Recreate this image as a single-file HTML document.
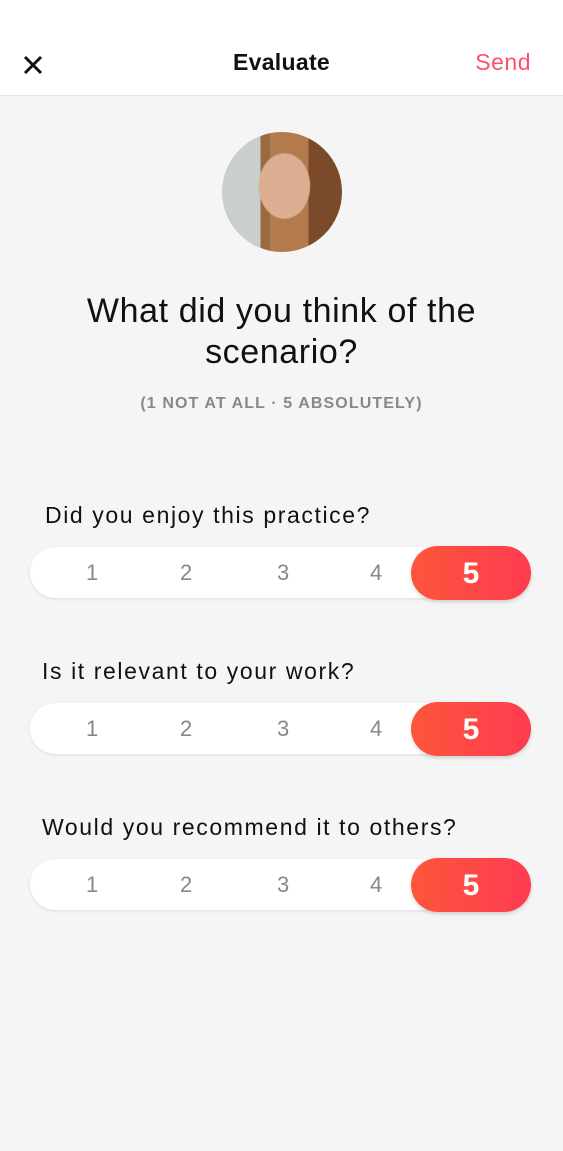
<!DOCTYPE html>
<html><head><meta charset="utf-8"><style>
*{margin:0;padding:0;box-sizing:border-box}
body{width:563px;height:1151px;background:#f5f5f5;font-family:"Liberation Sans",Arial,sans-serif;position:relative;overflow:hidden}
.hdr{position:absolute;left:0;top:0;width:563px;height:96px;background:#fff;border-bottom:1px solid #e4e4e4}
.title{position:absolute;top:49px;left:0;width:563px;text-align:center;font-size:23px;font-weight:bold;color:#111;letter-spacing:.3px}
.send{position:absolute;top:49px;right:32px;font-size:23px;color:#fe5068;letter-spacing:.5px}
.x{position:absolute;left:22px;top:54px}
.av{position:absolute;left:222px;top:132px;width:120px;height:120px;border-radius:50%;overflow:hidden;background:radial-gradient(ellipse 22% 28% at 52% 45%,#dcae92 0 95%,transparent 100%),linear-gradient(90deg,#c9cfcc 0 32%,#9a6a40 32% 40%,#b37a4e 40% 72%,#7a4a2a 72% 100%)}
.q{position:absolute;top:291px;left:0;width:563px;text-align:center;font-size:34px;line-height:41px;color:#111;letter-spacing:.6px}
.sub{position:absolute;top:395px;left:0;width:563px;text-align:center;font-size:16px;color:#888;letter-spacing:1.1px;font-weight:bold}
.lbl{position:absolute;font-size:23px;color:#111;letter-spacing:1.6px}
.bar{position:absolute;left:30px;width:498px;height:51px;background:#fff;border-radius:26px;box-shadow:0 1px 3px rgba(0,0,0,.1)}
.bar span{position:absolute;top:13px;font-size:22px;color:#888}
.sel{position:absolute;left:381px;top:-1px;width:120px;height:54px;border-radius:27px;background:linear-gradient(90deg,#fd553b,#fe3c50);box-shadow:0 2px 4px rgba(0,0,0,.15);color:#fff;font-size:30px;text-align:center;line-height:56px;font-weight:bold}
</style></head><body>
<div class="hdr">
<svg class="x" width="22" height="22" viewBox="0 0 22 22"><path d="M3 3L19 19M19 3L3 19" stroke="#111" stroke-width="3"/></svg>
<div class="title">Evaluate</div><div class="send">Send</div>
</div>
<div class="av"></div>
<div class="q">What did you think of the<br>scenario?</div>
<div class="sub">(1 NOT AT ALL · 5 ABSOLUTELY)</div>

<div class="lbl" style="left:45px;top:502px">Did you enjoy this practice?</div>
<div class="bar" style="top:547px"><span style="left:56px">1</span><span style="left:150px">2</span><span style="left:247px">3</span><span style="left:340px">4</span><div class="sel">5</div></div>

<div class="lbl" style="left:42px;top:658px">Is it relevant to your work?</div>
<div class="bar" style="top:703px"><span style="left:56px">1</span><span style="left:150px">2</span><span style="left:247px">3</span><span style="left:340px">4</span><div class="sel">5</div></div>

<div class="lbl" style="left:42px;top:814px">Would you recommend it to others?</div>
<div class="bar" style="top:859px"><span style="left:56px">1</span><span style="left:150px">2</span><span style="left:247px">3</span><span style="left:340px">4</span><div class="sel">5</div></div>
</body></html>
